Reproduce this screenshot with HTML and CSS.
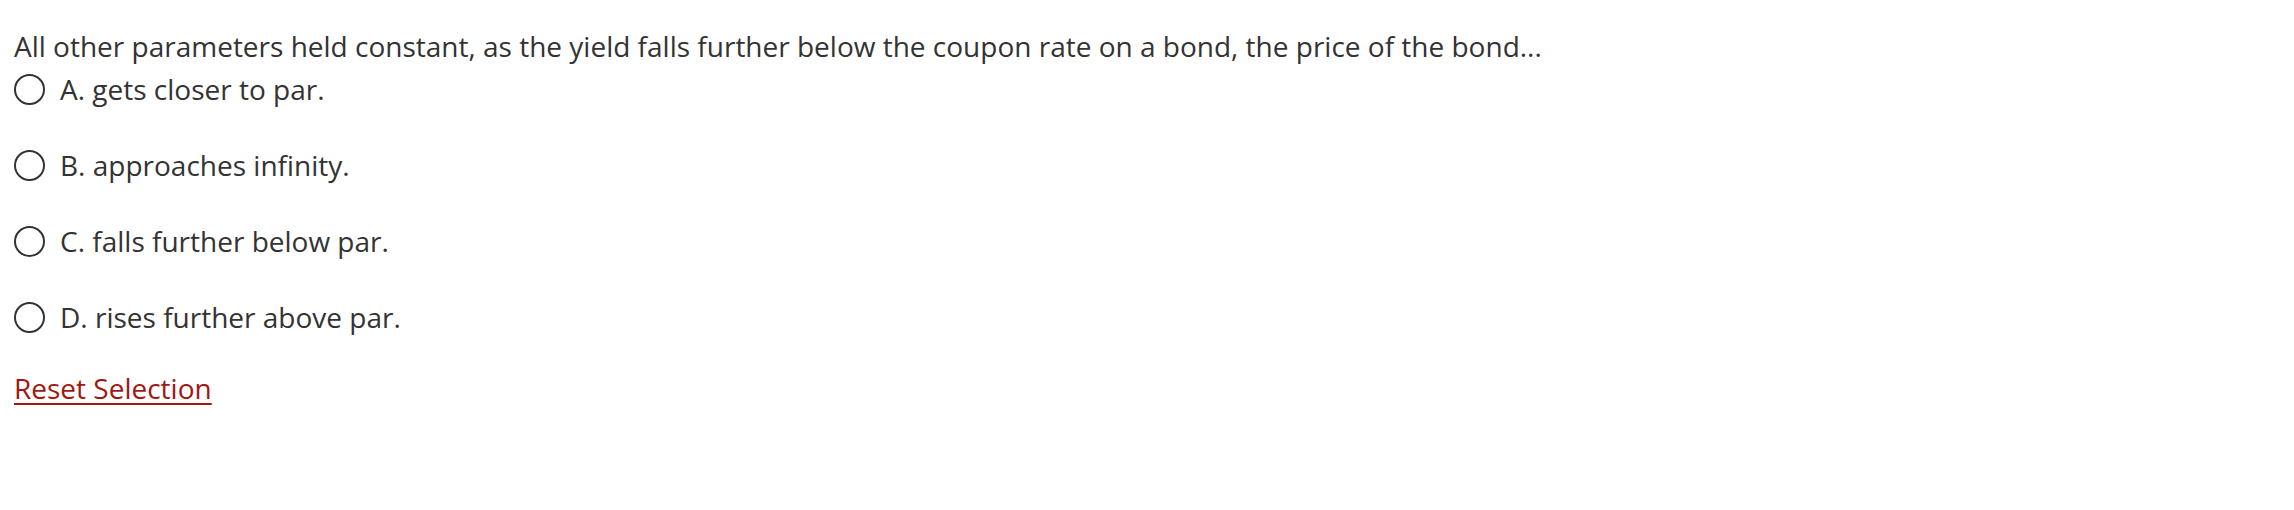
FILE: index.html
```html
<!DOCTYPE html>
<html lang="en">
<head>
<meta charset="utf-8">
<title>Question</title>
<link rel="stylesheet" href="styles.css">
</head>
<body>
<div class="question">
  <div class="prompt">All other parameters held constant, as the yield falls further below the coupon rate on a bond, the price of the bond...</div>
  <div class="options">
    <label class="option"><input class="radio" type="radio" name="q1"><span class="text">A. gets closer to par.</span></label>
    <label class="option"><input class="radio" type="radio" name="q1"><span class="text">B. approaches infinity.</span></label>
    <label class="option"><input class="radio" type="radio" name="q1"><span class="text">C. falls further below par.</span></label>
    <label class="option"><input class="radio" type="radio" name="q1"><span class="text">D. rises further above par.</span></label>
  </div>
  <a class="reset" href="#">Reset Selection</a>
</div>
</body>
</html>
```
FILE: styles.css
```css
html, body {
  margin: 0;
  padding: 0;
  background: #ffffff;
}

body {
  font-family: "Open Sans", "Liberation Sans", sans-serif;
  font-size: 28px;
  line-height: 42px;
  color: #333333;
}

.question {
  display: flex;
  flex-direction: column;
  align-items: flex-start;
  padding: 25px 14px 0 14px;
}

.prompt {
  margin-bottom: 0.5px;
}

.options {
  display: flex;
  flex-direction: column;
  gap: 34px;
}

.option {
  display: flex;
  align-items: center;
  gap: 15px;
  cursor: pointer;
}

.radio {
  appearance: none;
  -webkit-appearance: none;
  margin: 2px 0 0 0;
  width: 31px;
  height: 31px;
  box-sizing: border-box;
  border: 2px solid #333333;
  border-radius: 50%;
  background: #ffffff;
  flex: none;
}

.reset {
  margin-top: 29px;
  color: #a0180f;
  text-decoration: underline;
  text-decoration-thickness: 2px;
  text-underline-offset: 4px;
}
```
